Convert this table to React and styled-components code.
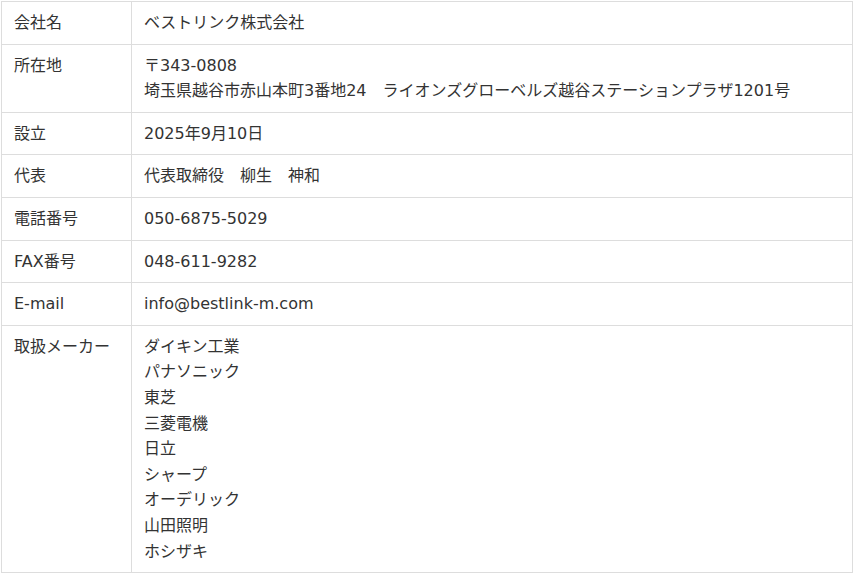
import React from "react";
import styled, { createGlobalStyle } from "styled-components";

const Global = createGlobalStyle`
  html, body { margin: 0; padding: 0; background: #fff; }
  body {
    padding: 1px;
    font-family: "DejaVu Sans", "Noto Sans CJK JP", sans-serif;
    color: #333;
  }
`;

const Table = styled.table`
  width: 852px;
  border-collapse: collapse;
  font-size: 16px;
  line-height: 1.6;
`;

const Head = styled.th`
  width: 105px;
  padding: 8px 12px;
  border: 1px solid #ddd;
  text-align: left;
  vertical-align: top;
  font-weight: 400;
  white-space: nowrap;
`;

const Cell = styled.td`
  padding: 8px 12px;
  border: 1px solid #ddd;
  vertical-align: top;
`;

const Line = styled.div``;

const rows = [
  ["会社名", ["ベストリンク株式会社"]],
  ["所在地", ["〒343-0808", "埼玉県越谷市赤山本町3番地24　ライオンズグローベルズ越谷ステーションプラザ1201号"]],
  ["設立", ["2025年9月10日"]],
  ["代表", ["代表取締役　柳生　神和"]],
  ["電話番号", ["050-6875-5029"]],
  ["FAX番号", ["048-611-9282"]],
  ["E-mail", ["info@bestlink-m.com"]],
  ["取扱メーカー", ["ダイキン工業", "パナソニック", "東芝", "三菱電機", "日立", "シャープ", "オーデリック", "山田照明", "ホシザキ"]],
];

export default function App() {
  return (
    <>
      <Global />
      <Table>
        <tbody>
          {rows.map(([k, v]) => (
            <tr key={k}>
              <Head>{k}</Head>
              <Cell>
                {v.map((l, i) => (
                  <Line key={i}>{l}</Line>
                ))}
              </Cell>
            </tr>
          ))}
        </tbody>
      </Table>
    </>
  );
}
